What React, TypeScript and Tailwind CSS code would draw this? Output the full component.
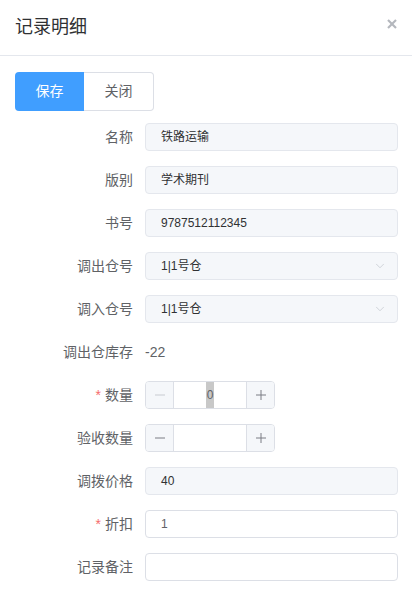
import { ChevronDown } from "lucide-react";

const font = { fontFamily: '"Liberation Sans", "Noto Sans CJK SC", sans-serif' };

function Label({ text, required }: { text: string; required?: boolean }) {
  return (
    <div className="w-[145px] shrink-0 pr-[12px] text-right text-[14px] text-[#606266] leading-[28px]">
      {required && <span className="mr-[4px] text-[#f56c6c]">*</span>}
      {text}
    </div>
  );
}

function Field({ value, disabled }: { value: string; disabled?: boolean }) {
  return (
    <div
      className={
        disabled
          ? "flex-1 h-[28px] rounded-[4px] border border-[#e4e7ed] bg-[#f5f7fa] pl-[15px] text-[12px] leading-[26px] text-[#303133]"
          : "flex-1 h-[28px] rounded-[4px] border border-[#dcdfe6] bg-white pl-[15px] text-[12px] leading-[26px] text-[#606266]"
      }
    >
      {value}
    </div>
  );
}

function SelectField({ value }: { value: string }) {
  return (
    <div className="flex-1 h-[28px] flex items-center justify-between rounded-[4px] border border-[#e4e7ed] bg-[#f5f7fa] pl-[15px] pr-[10px] text-[12px] text-[#303133]">
      <span>{value}</span>
      <ChevronDown size={14} strokeWidth={1.2} className="text-[#c0c4cc]" />
    </div>
  );
}

function Minus() {
  return (
    <svg width="10" height="10" viewBox="0 0 10 10">
      <line x1="0" y1="5" x2="10" y2="5" stroke="currentColor" strokeWidth="1" />
    </svg>
  );
}

function Plus() {
  return (
    <svg width="10" height="10" viewBox="0 0 10 10">
      <line x1="0" y1="5" x2="10" y2="5" stroke="currentColor" strokeWidth="1" />
      <line x1="5" y1="0" x2="5" y2="10" stroke="currentColor" strokeWidth="1" />
    </svg>
  );
}

function NumberInput({ value, minDisabled }: { value?: string; minDisabled?: boolean }) {
  return (
    <div className="flex w-[130px] h-[28px] rounded-[4px] border border-[#dcdfe6] overflow-hidden">
      <div
        className={
          "w-[28px] shrink-0 flex items-center justify-center bg-[#f5f7fa] border-r border-[#dcdfe6] " +
          (minDisabled ? "text-[#c8cbd1]" : "text-[#7a7d84]")
        }
      >
        <Minus />
      </div>
      <div className="flex-1 flex items-center justify-center bg-white text-[12px] text-[#606266]">
        {value && <span className="bg-[#c8c8c8] px-[1px] leading-[26px]">{value}</span>}
      </div>
      <div className="w-[28px] shrink-0 flex items-center justify-center bg-[#f5f7fa] border-l border-[#dcdfe6] text-[#7a7d84]">
        <Plus />
      </div>
    </div>
  );
}

function Row({ children }: { children: React.ReactNode }) {
  return <div className="flex items-center h-[28px] pr-[14px]">{children}</div>;
}

export default function App() {
  return (
    <div className="w-[412px] h-[609px] bg-white overflow-hidden" style={font}>
      <div className="h-[56px] flex items-center justify-between pl-[15px] pr-[15px] border-b border-[#e4e7ed]">
        <span className="text-[18px] text-[#303133]">记录明细</span>
        <svg width="10" height="10" viewBox="0 0 10 10" className="text-[#b4b7bd] -mt-[8px]">
          <line x1="1" y1="1" x2="9" y2="9" stroke="currentColor" strokeWidth="2.2" />
          <line x1="9" y1="1" x2="1" y2="9" stroke="currentColor" strokeWidth="2.2" />
        </svg>
      </div>
      <div className="pt-[16px] pl-[15px]">
        <div className="flex h-[39px] w-[139px]">
          <div className="w-[69px] flex items-center justify-center rounded-l-[4px] bg-[#409eff] text-white text-[14px]">
            保存
          </div>
          <div className="w-[70px] flex items-center justify-center rounded-r-[4px] border border-l-0 border-[#dcdfe6] text-[#606266] text-[14px]">
            关闭
          </div>
        </div>
      </div>
      <div className="mt-[12px] flex flex-col gap-[15px]">
        <Row>
          <Label text="名称" />
          <Field value="铁路运输" disabled />
        </Row>
        <Row>
          <Label text="版别" />
          <Field value="学术期刊" disabled />
        </Row>
        <Row>
          <Label text="书号" />
          <Field value="9787512112345" disabled />
        </Row>
        <Row>
          <Label text="调出仓号" />
          <SelectField value="1|1号仓" />
        </Row>
        <Row>
          <Label text="调入仓号" />
          <SelectField value="1|1号仓" />
        </Row>
        <Row>
          <Label text="调出仓库存" />
          <span className="text-[14px] text-[#606266]">-22</span>
        </Row>
        <Row>
          <Label text="数量" required />
          <NumberInput value="0" minDisabled />
        </Row>
        <Row>
          <Label text="验收数量" />
          <NumberInput />
        </Row>
        <Row>
          <Label text="调拨价格" />
          <Field value="40" disabled />
        </Row>
        <Row>
          <Label text="折扣" required />
          <Field value="1" />
        </Row>
        <Row>
          <Label text="记录备注" />
          <Field value="" />
        </Row>
      </div>
    </div>
  );
}
